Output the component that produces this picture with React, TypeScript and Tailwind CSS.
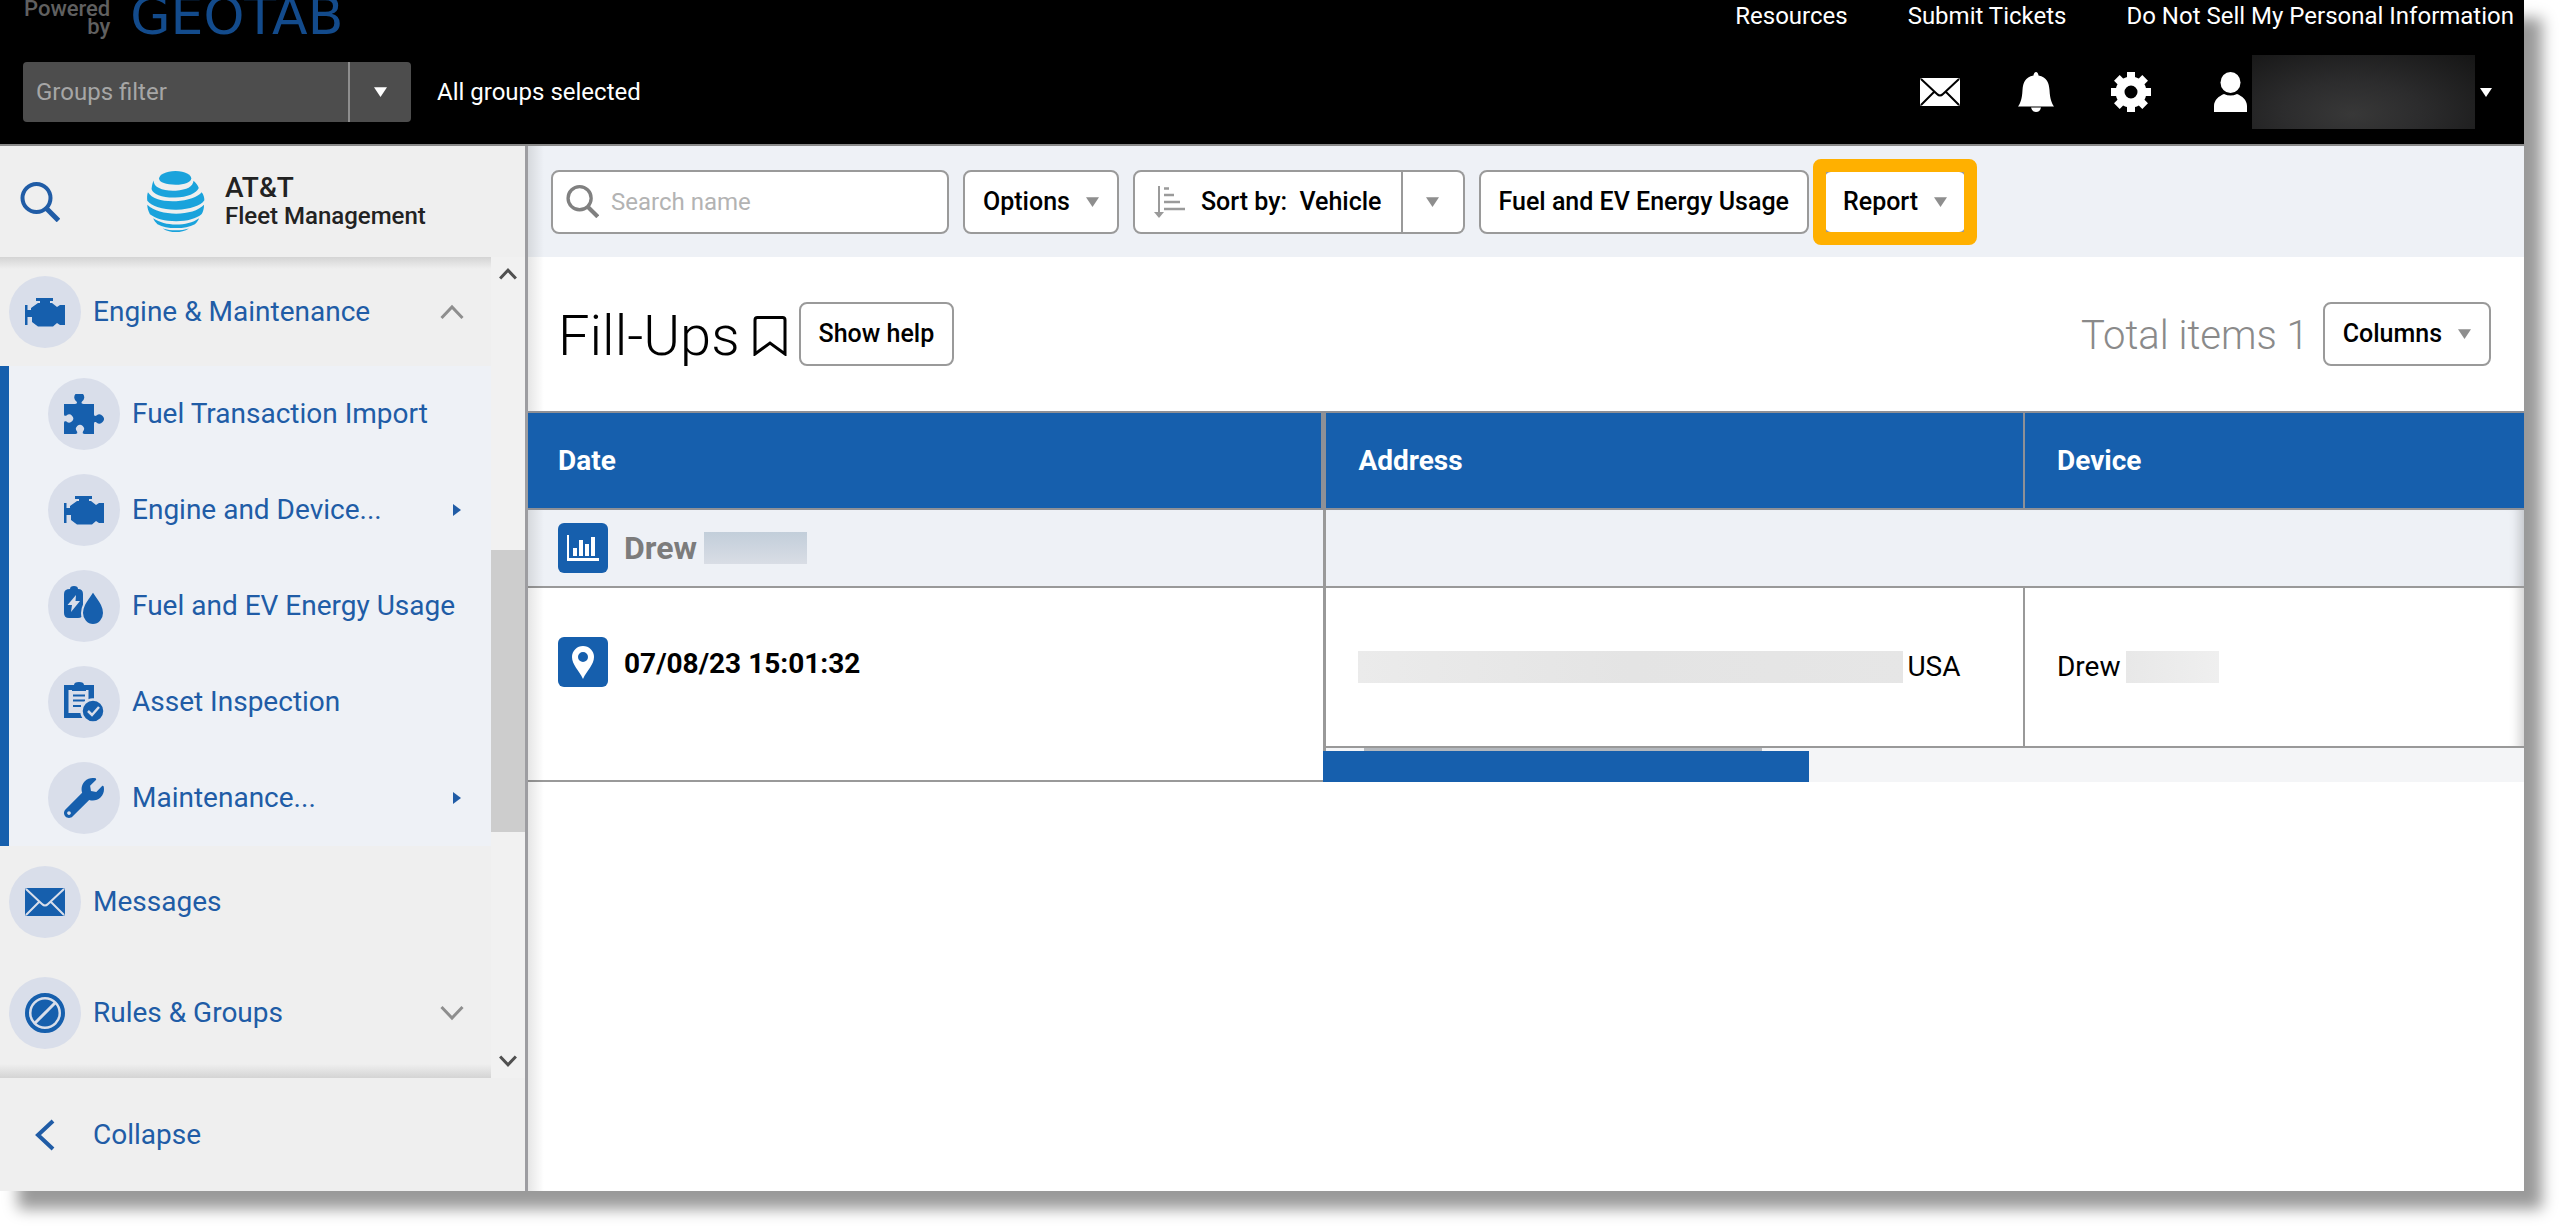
import React, { useState } from "react";
import { FaWrench } from "react-icons/fa";

type IconProps = { className?: string };

const EngineIcon = ({ className }: IconProps) => (
  <svg viewBox="0 0 40 40" className={className} fill="currentColor" aria-hidden="true">
    <path d="M0 13h2.500v5H6v-2l7-5h2V9h-4V6h17v3h-3v2h2l5 4 3-2h5v20h-5l-3-2-4 3.500H13L7 30v-5H2.500v8H0z" />
  </svg>
);

const PuzzleIcon = ({ className }: IconProps) => (
  <svg viewBox="0 0 40 40" className={className} fill="currentColor" aria-hidden="true">
    <path d="M0 10h11c2 0 2.500-1 1.500-2.500a5 5 0 1 1 5.500 0c-1 1.500-.5 2.500 1.500 2.500H30v10c0 2 1 2.500 2.500 1.500a4.500 4.500 0 1 1 0 7c-1.500-1-2.500-.5-2.500 1.500v10H20.500c-2 0-2-1-1.500-2.500a4 4 0 1 0-6 0c.5 1.500.5 2.500-1.500 2.500H0V29c0-2 1-2 2.500-1.500a4 4 0 1 0 0-6C1 22 0 22 0 20z" />
  </svg>
);

const EnergyIcon = ({ className }: IconProps) => (
  <svg viewBox="0 0 40 40" className={className} fill="currentColor" aria-hidden="true">
    <path d="M6 3q0-3 4-3t4 3q5 0 5 5v19q0 5-5 5H5q-5 0-5-5V8q0-5 6-5z" />
    <path d="M12 9 3.500 19H8l-1 7 9-11h-4.500z" fill="#d9deea" />
    <path d="M29 5c6 9 11 14 11 22a11 12 0 0 1-22 0c0-8 5-13 11-22z" stroke="#d9deea" strokeWidth="2" />
  </svg>
);

const InspectionIcon = ({ className }: IconProps) => (
  <svg viewBox="0 0 40 40" className={className} fill="currentColor" aria-hidden="true">
    <path d="M0 3h10q0-3 5-3t5 3h10v33H0zM4.500 8v23h20V8z" fillRule="evenodd" />
    <path d="M8 3h14v6H8z" />
    <path d="M9 13.500h12M9 18.500h12M9 24h8" stroke="currentColor" strokeWidth="2" />
    <circle cx="29" cy="29" r="11.500" stroke="#d9deea" strokeWidth="2.500" />
    <path d="m24 29 4 4 7-8" fill="none" stroke="#d9deea" strokeWidth="2.500" />
  </svg>
);

const MailIcon = ({ className, line = "#d9deea" }: IconProps & { line?: string }) => (
  <svg viewBox="0 0 40 28" className={className} fill="currentColor" aria-hidden="true">
    <rect width="40" height="28" rx="2" />
    <path d="m1 1 16 15q3 3 6 0L39 1M1 27l13-13M39 27 26 14" fill="none" stroke={line} strokeWidth="2" />
  </svg>
);

const RulesIcon = ({ className }: IconProps) => (
  <svg viewBox="0 0 40 40" className={className} fill="currentColor" aria-hidden="true">
    <circle cx="20" cy="20" r="18" fill="none" stroke="currentColor" strokeWidth="4" />
    <circle cx="20" cy="20" r="13.500" />
    <path d="M10 30 30 10" stroke="#d9deea" strokeWidth="3" />
  </svg>
);

const BellIcon = ({ className }: IconProps) => (
  <svg viewBox="0 0 36 40" className={className} fill="currentColor" aria-hidden="true">
    <path d="M18 0q2 0 2.500 3.500C29 5 31 11 31.500 18c.5 9 2 13 4.500 16.500H0C2.500 31 4 27 4.500 18 5 11 7 5 15.500 3.500 16 0 18 0 18 0zM13 35.500h10q-1 4.500-5 4.500t-5-4.500z" />
  </svg>
);

const GearIcon = ({ className }: IconProps) => (
  <svg viewBox="-20 -20 40 40" className={className} aria-hidden="true">
    <circle r="11" fill="none" stroke="currentColor" strokeWidth="9" />
    {[0, 45, 90, 135].map((deg) => (
      <path key={deg} d="M-4-20h8v7h-8zM-4 13h8v7h-8z" fill="currentColor" transform={`rotate(${deg})`} />
    ))}
  </svg>
);

const UserIcon = ({ className }: IconProps) => (
  <svg viewBox="0 0 33 40" className={className} fill="currentColor" aria-hidden="true">
    <ellipse cx="16.500" cy="10.500" rx="10" ry="10.500" />
    <path d="M0 40v-6c0-6 5-10 10-12q6.500 3 13 0c5 2 10 6 10 12v6z" />
  </svg>
);

const SearchIcon = ({ className }: IconProps) => (
  <svg viewBox="0 0 40 40" className={className} fill="none" stroke="currentColor" strokeWidth="4" aria-hidden="true">
    <circle cx="16.500" cy="16" r="14" />
    <path d="m26 26 12.500 12.500" strokeWidth="5" />
  </svg>
);

const SortIcon = ({ className }: IconProps) => (
  <svg viewBox="0 0 32 32" className={className} fill="none" stroke="currentColor" strokeWidth="2" aria-hidden="true">
    <path d="M5 0v30" />
    <path d="M0 26h10l-5 6z" fill="currentColor" stroke="none" />
    <path d="M10 2.500h5M10 9h10M10 16h16M10 23h21" strokeWidth="2.500" />
  </svg>
);

const Caret = ({ className = "ml-4 h-[10px] w-[13px] text-[#8e8e8e]" }: IconProps) => (
  <svg viewBox="0 0 12 9" className={className} fill="currentColor" aria-hidden="true">
    <path d="M0 0h12L6 9z" />
  </svg>
);

const Chevron = ({ className }: IconProps) => (
  <svg viewBox="0 0 24 16" className={className} fill="none" stroke="currentColor" strokeWidth="3" aria-hidden="true">
    <path d="m1.500 2 10.500 11L22.500 2" />
  </svg>
);

const Globe = () => (
  <svg viewBox="16 15 178 186" className="w-[59px] h-[61px]" aria-hidden="true">
    <g fill="#1aa3dc">
      <path d="M105 15c30 0 48 12 48 22 0 12-20 20-48 20-28 0-50-7-50-19 0-11 20-23 50-23z" />
      <path d="M38 44c0 22 30 33 68 31 34-2 52-12 54-30 8 8 13 14 16 22-8 17-34 28-72 29-38 1-68-9-72-26 1-10 3-18 6-26z" />
      <path d="M21 80c12 20 45 29 86 27 36-2 66-12 78-27 6 8 8 16 8 24-10 16-44 28-84 29-40 1-76-9-90-27-1-9-1-18 2-26z" />
      <path d="M19 118c20 19 53 27 88 27 36 0 68-9 85-27 0 13-3 21-7 28-16 14-44 22-78 22-34 0-62-7-80-21-5-10-8-19-8-29z" />
      <path d="M37 159c20 13 42 19 70 19 27 0 50-5 70-19-3 8-7 13-13 18-16 8-34 12-57 12-24 0-42-4-57-12-6-5-10-11-13-18z" />
      <path d="M66 190c26 8 54 8 80 0-12 8-26 11-40 11s-28-3-40-11z" />
    </g>
  </svg>
);

const subItems = [
  { label: "Fuel Transaction Import", icon: PuzzleIcon },
  { label: "Engine and Device...", icon: EngineIcon, more: true },
  { label: "Fuel and EV Energy Usage", icon: EnergyIcon },
  { label: "Asset Inspection", icon: InspectionIcon },
  { label: "Maintenance...", icon: FaWrench, more: true },
];

const Badge = ({ children }: { children: React.ReactNode }) => (
  <span className="flex size-[72px] shrink-0 items-center justify-center rounded-full bg-[#d9deea] text-[#165fad]">
    {children}
  </span>
);

const Header = () => (
  <header className="flex flex-col border-b-2 border-[#8a8a8a] bg-black text-2xl text-white">
    <div className="flex h-10 items-start justify-between pl-6 pr-[10px]">
      <div className="flex gap-5">
        <div className="text-right text-[22px] font-medium leading-[18px] text-[#606060]">
          Powered
          <br />
          by
        </div>
        <div className="font-['DejaVu_Sans',sans-serif] text-[52px] leading-8 text-[#134b8c]">GEOTAB</div>
      </div>
      <nav className="flex gap-[60px] leading-8">
        <a href="#resources">Resources</a>
        <a href="#tickets">Submit Tickets</a>
        <a href="#privacy">Do Not Sell My Personal Information</a>
      </nav>
    </div>
    <div className="flex h-[104px] items-center pl-[23px] pr-8">
      <div className="flex h-[60px] w-[388px] overflow-hidden rounded bg-[#4d4d4d]">
        <input
          aria-label="Groups filter"
          placeholder="Groups filter"
          className="min-w-0 flex-1 px-[13px] placeholder:text-[#a6a6a6] placeholder:opacity-100"
        />
        <button aria-label="Open groups" className="flex w-[63px] items-center justify-center border-l-2 border-[#8e8e8e]">
          <Caret className="h-[10px] w-[13px]" />
        </button>
      </div>
      <span className="ml-[26px]">All groups selected</span>
      <div className="ml-auto flex items-center">
        <button aria-label="Messages"><MailIcon line="#000" className="h-7 w-10" /></button>
        <button aria-label="Notifications" className="ml-[58px]"><BellIcon className="h-10 w-9" /></button>
        <button aria-label="Settings" className="ml-[57px]"><GearIcon className="size-10" /></button>
        <button aria-label="Account" className="ml-[63px] flex items-center">
          <UserIcon className="h-10 w-[33px]" />
          <span className="ml-[5px] h-[74px] w-[223px] bg-[radial-gradient(ellipse_at_45%_80%,#383838,#2c2c2d_40%,#151515)]" />
          <Caret className="ml-[5px] h-[9px] w-3" />
        </button>
      </div>
    </div>
  </header>
);

const Sidebar = () => {
  const [open, setOpen] = useState(true);

  return (
    <aside className="flex w-[528px] shrink-0 flex-col border-r-[3px] border-[#9d9da1] bg-[#efefef] text-[28px] text-[#205ca6]">
      <div className="flex h-[111px] items-center pl-5">
        <button aria-label="Search menu"><SearchIcon className="size-10" /></button>
        <div className="ml-[86px] flex items-center gap-5">
          <Globe />
          <div className="font-medium leading-7 text-[#222]">
            <div className="text-[28px]">AT&amp;T</div>
            <div className="text-2xl leading-7">Fleet Management</div>
          </div>
        </div>
      </div>

      <div className="flex min-h-0 flex-1">
        <div className="relative flex-1 overflow-hidden">
          <div className="pointer-events-none absolute inset-x-0 top-0 h-3 bg-linear-to-b from-[#d4d4d4] to-transparent" />
          <button onClick={() => setOpen(!open)} className="flex h-[109px] w-full items-center gap-3 pl-[9px] pr-[27px]">
            <Badge><EngineIcon className="size-10" /></Badge>
            Engine &amp; Maintenance
            <Chevron className={open ? "ml-auto h-4 w-6 rotate-180 text-[#8e8e8e]" : "ml-auto h-4 w-6 text-[#8e8e8e]"} />
          </button>
          {open && (
            <ul className="border-l-[9px] border-[#165fad] bg-[#eef1f6]">
              {subItems.map(({ label, icon: Icon, more }) => (
                <li key={label}>
                  <a href="#menu" className="flex h-24 items-center gap-3 pl-[39px] pr-[30px]">
                    <Badge><Icon className="size-10" /></Badge>
                    <span className="whitespace-nowrap">{label}</span>
                    {more && (
                      <svg viewBox="0 0 8 12" className="ml-auto h-3 w-2" fill="currentColor" aria-hidden="true">
                        <path d="M0 0v12l8-6z" />
                      </svg>
                    )}
                  </a>
                </li>
              ))}
            </ul>
          )}
          <a href="#messages" className="flex h-[111px] items-center gap-3 pl-[9px]">
            <Badge><MailIcon className="h-7 w-10" /></Badge>
            Messages
          </a>
          <button className="flex h-[111px] w-full items-center gap-3 pl-[9px] pr-[27px]">
            <Badge><RulesIcon className="size-10" /></Badge>
            Rules &amp; Groups
            <Chevron className="ml-auto h-4 w-6 text-[#8e8e8e]" />
          </button>
          <div className="pointer-events-none absolute inset-x-0 bottom-0 h-[14px] bg-linear-to-t from-[#d4d4d4] to-transparent" />
        </div>
        <div className="flex w-[34px] flex-col bg-[#f1f1f1] text-[#505050]">
          <div className="flex h-[34px] items-center justify-center"><Chevron className="h-3 w-[18px] rotate-180 stroke-4" /></div>
          <div className="grow-[259]" />
          <div className="grow-[282] bg-[#cdcdcd]" />
          <div className="grow-[212]" />
          <div className="flex h-[34px] items-center justify-center"><Chevron className="h-3 w-[18px] stroke-4" /></div>
        </div>
      </div>

      <button className="flex h-[113px] items-center pl-[35px]">
        <svg viewBox="0 0 20 32" className="h-8 w-5" fill="none" stroke="currentColor" strokeWidth="4" aria-hidden="true">
          <path d="M18 2 3 16l15 14" />
        </svg>
        <span className="ml-[38px]">Collapse</span>
      </button>
    </aside>
  );
};

const buttonClass =
  "flex h-16 items-center rounded-lg border-2 border-[#9a9a9a] bg-white px-[18px] text-[25px] font-medium whitespace-nowrap";

const Toolbar = () => (
  <div className="flex h-[111px] items-center gap-[14px] bg-[#eef1f6] pl-[23px] text-[25px]">
    <label className="flex h-16 w-[398px] items-center gap-3 rounded-lg border-2 border-[#9a9a9a] bg-white pl-[13px]">
      <SearchIcon className="size-[33px] text-[#808080]" />
      <input
        aria-label="Search name"
        placeholder="Search name"
        className="min-w-0 flex-1 text-2xl placeholder:text-[#b3b3b3] placeholder:opacity-100"
      />
    </label>
    <button className={buttonClass}>Options <Caret /></button>
    <div className="flex">
      <button className="flex h-16 items-center rounded-l-lg border-2 border-[#9a9a9a] bg-white px-[19px] font-medium whitespace-pre">
        <SortIcon className="mr-[15px] size-8 text-[#9a9a9a]" />
        Sort by:  Vehicle
      </button>
      <button aria-label="Sort options" className="flex h-16 w-[62px] items-center justify-center rounded-r-lg border-2 border-l-0 border-[#9a9a9a] bg-white">
        <Caret className="h-[10px] w-[13px] text-[#8e8e8e]" />
      </button>
    </div>
    <button className={buttonClass}>Fuel and EV Energy Usage</button>
    <div className="relative">
      <button className={buttonClass}>Report <Caret /></button>
      <div className="pointer-events-none absolute -inset-x-[10px] -inset-y-[11px] rounded-lg border-[13px] border-[#ffb000]" />
    </div>
  </div>
);

const FillUpsTable = () => (
  <table className="w-full table-fixed border-separate border-spacing-0 text-left text-[28px]">
    <colgroup>
      <col className="w-[40%]" />
      <col className="w-[35%]" />
      <col className="w-[25%]" />
    </colgroup>
    <thead>
      <tr className="h-[99px] bg-[#165fad] text-white">
        <th className="relative z-20 border-y-2 border-r-[5px] border-[#8e9096] bg-[#165fad] pl-[30px]">Date</th>
        <th className="border-y-2 border-r-2 border-[#8e9096] pl-8">Address</th>
        <th className="border-y-2 border-[#8e9096] pl-8">Device</th>
      </tr>
    </thead>
    <tbody>
      <tr className="h-[78px] bg-[#eef1f6]">
        <td className="border-b-2 border-r-[3px] border-[#999] pl-[30px]">
          <div className="flex items-center">
            <span className="flex size-[50px] items-center justify-center rounded-md bg-[#165fad] text-white">
              <svg viewBox="0 0 32 26" className="h-[26px] w-8" fill="currentColor" aria-hidden="true">
                <path d="M0 0h2v23h30v3H0zM6 13h4v8H6zM12 5h4v16h-4zM18 9h4v12h-4zM24 2h4v19h-4z" />
              </svg>
            </span>
            <span className="ml-4 text-[32px] font-bold leading-10 text-[#7c7c7c]">Drew</span>
            <span className="ml-[7px] h-8 w-[103px] bg-linear-to-b from-[#c2ceda] to-[#d9dde5]" />
          </div>
        </td>
        <td colSpan={2} className="border-b-2 border-[#999] shadow-[inset_-14px_0_12px_-10px_rgba(0,0,0,0.2)]" />
      </tr>
      <tr className="h-40">
        <td rowSpan={2} className="border-b-2 border-r-[3px] border-[#999] pl-[30px] pt-[49px] align-top">
          <div className="flex items-center gap-4">
            <span className="flex size-[50px] items-center justify-center rounded-md bg-[#165fad] text-white">
              <svg viewBox="0 0 22 33" className="h-[33px] w-[22px]" fill="currentColor" aria-hidden="true">
                <path d="M11 0a11 11 0 0 1 11 11c0 8-7 13-11 22C7 24 0 19 0 11A11 11 0 0 1 11 0zm0 6a5 5 0 1 0 0 10 5 5 0 0 0 0-10z" fillRule="evenodd" />
              </svg>
            </span>
            <span className="mt-1 font-bold">07/08/23 15:01:32</span>
          </div>
        </td>
        <td className="border-b-2 border-r-2 border-[#999] pl-8">
          <div className="flex items-center gap-1">
            <span className="h-8 w-[545px] bg-linear-to-r from-[#ebebeb] via-[#e4e4e4] to-[#e6e6e6]" />
            USA
          </div>
        </td>
        <td className="border-b-2 border-[#999] pl-8 shadow-[inset_-14px_0_12px_-10px_rgba(0,0,0,0.2)]">
          <div className="flex items-center gap-[6px]">
            Drew
            <span className="h-8 w-[93px] bg-linear-to-r from-[#e8e8e8] to-[#efefef]" />
          </div>
        </td>
      </tr>
      <tr className="h-[34px]">
        <td colSpan={2} className="relative bg-[#f4f5f7] p-0">
          <div className="ml-[38px] h-[3px] w-[398px] bg-[#b4b8bd]" />
          <div className="relative z-20 -ml-[3px] h-[31px] w-[486px] bg-[#165fad]" />
        </td>
      </tr>
    </tbody>
  </table>
);

const App = () => {
  return (
    <div className="flex min-h-screen flex-col bg-white pb-[37px] pr-9 font-[Roboto,sans-serif] text-black">
      <div className="flex flex-1 flex-col bg-white shadow-[18px_18px_14px_rgba(0,0,0,0.4)]">
        <Header />
        <div className="flex flex-1">
          <Sidebar />
          <main className="relative min-w-0 flex-1 bg-white">
            <div className="pointer-events-none absolute inset-y-0 left-0 z-10 w-4 bg-linear-to-r from-black/10 to-transparent" />
            <Toolbar />
            <div className="flex h-[154px] items-center pl-[30px] pr-[33px]">
              <h1 className="mt-1 text-[56px] font-light">Fill-Ups</h1>
              <button aria-label="Bookmark" className="ml-[13px] mt-1">
                <svg viewBox="0 0 34 40" className="h-10 w-[34px]" fill="none" stroke="currentColor" strokeWidth="3" aria-hidden="true">
                  <path d="M2 38V4q0-2.500 2.500-2.500h25Q32 1.500 32 4v34L17 27z" />
                </svg>
              </button>
              <button className={`ml-3 ${buttonClass}`}>Show help</button>
              <span className="ml-auto mt-1 text-[40px] font-light text-[#8a8a8a]">Total items 1</span>
              <button className={`ml-[14px] ${buttonClass}`}>Columns <Caret /></button>
            </div>
            <FillUpsTable />
          </main>
        </div>
      </div>
    </div>
  );
};

export default App;
